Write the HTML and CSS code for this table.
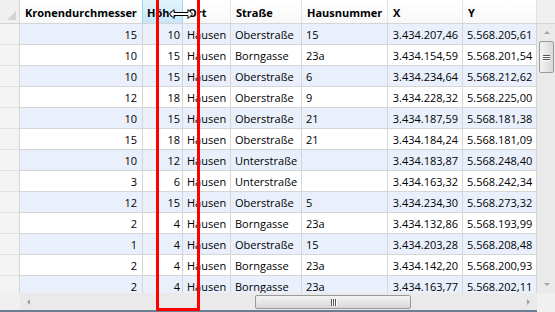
FILE: index.html
```html
<!DOCTYPE html>
<html>
<head>
<meta charset="utf-8">
<link rel="stylesheet" href="styles.css">
</head>
<body>
<div class="grid">
  <div class="corner"><span class="tri"></span></div>
  <div class="colheads">
    <div class="ch c1">Kronendurchmesser</div>
    <div class="ch c2 hot">Höhe</div>
    <div class="ch c3">Ort</div>
    <div class="ch c4">Straße</div>
    <div class="ch c5">Hausnummer</div>
    <div class="ch c6">X</div>
    <div class="ch c7">Y</div>
  </div>
  <div class="fill-tr"></div>

  <div class="rowheads">
    <div class="rh"></div><div class="rh"></div><div class="rh"></div><div class="rh"></div>
    <div class="rh"></div><div class="rh"></div><div class="rh"></div><div class="rh"></div>
    <div class="rh"></div><div class="rh"></div><div class="rh"></div><div class="rh"></div>
    <div class="rh"></div>
  </div>

  <div class="body">
    <div class="row alt"><div class="cell c1 num">15</div><div class="cell c2 num">10</div><div class="cell c3">Hausen</div><div class="cell c4">Oberstraße</div><div class="cell c5">15</div><div class="cell c6 num">3.434.207,46</div><div class="cell c7">5.568.205,61</div></div>
    <div class="row"><div class="cell c1 num">10</div><div class="cell c2 num">15</div><div class="cell c3">Hausen</div><div class="cell c4">Borngasse</div><div class="cell c5">23a</div><div class="cell c6 num">3.434.154,59</div><div class="cell c7">5.568.201,54</div></div>
    <div class="row alt"><div class="cell c1 num">10</div><div class="cell c2 num">15</div><div class="cell c3">Hausen</div><div class="cell c4">Oberstraße</div><div class="cell c5">6</div><div class="cell c6 num">3.434.234,64</div><div class="cell c7">5.568.212,62</div></div>
    <div class="row"><div class="cell c1 num">12</div><div class="cell c2 num">18</div><div class="cell c3">Hausen</div><div class="cell c4">Oberstraße</div><div class="cell c5">9</div><div class="cell c6 num">3.434.228,32</div><div class="cell c7">5.568.225,00</div></div>
    <div class="row alt"><div class="cell c1 num">10</div><div class="cell c2 num">15</div><div class="cell c3">Hausen</div><div class="cell c4">Oberstraße</div><div class="cell c5">21</div><div class="cell c6 num">3.434.187,59</div><div class="cell c7">5.568.181,38</div></div>
    <div class="row"><div class="cell c1 num">15</div><div class="cell c2 num">18</div><div class="cell c3">Hausen</div><div class="cell c4">Oberstraße</div><div class="cell c5">21</div><div class="cell c6 num">3.434.184,24</div><div class="cell c7">5.568.181,09</div></div>
    <div class="row alt"><div class="cell c1 num">10</div><div class="cell c2 num">12</div><div class="cell c3">Hausen</div><div class="cell c4">Unterstraße</div><div class="cell c5"></div><div class="cell c6 num">3.434.183,87</div><div class="cell c7">5.568.248,40</div></div>
    <div class="row"><div class="cell c1 num">3</div><div class="cell c2 num">6</div><div class="cell c3">Hausen</div><div class="cell c4">Unterstraße</div><div class="cell c5"></div><div class="cell c6 num">3.434.163,32</div><div class="cell c7">5.568.242,34</div></div>
    <div class="row alt"><div class="cell c1 num">12</div><div class="cell c2 num">15</div><div class="cell c3">Hausen</div><div class="cell c4">Oberstraße</div><div class="cell c5">5</div><div class="cell c6 num">3.434.234,30</div><div class="cell c7">5.568.273,32</div></div>
    <div class="row"><div class="cell c1 num">2</div><div class="cell c2 num">4</div><div class="cell c3">Hausen</div><div class="cell c4">Borngasse</div><div class="cell c5">23a</div><div class="cell c6 num">3.434.132,86</div><div class="cell c7">5.568.193,99</div></div>
    <div class="row alt"><div class="cell c1 num">1</div><div class="cell c2 num">4</div><div class="cell c3">Hausen</div><div class="cell c4">Oberstraße</div><div class="cell c5">15</div><div class="cell c6 num">3.434.203,28</div><div class="cell c7">5.568.208,48</div></div>
    <div class="row"><div class="cell c1 num">2</div><div class="cell c2 num">4</div><div class="cell c3">Hausen</div><div class="cell c4">Borngasse</div><div class="cell c5">23a</div><div class="cell c6 num">3.434.142,20</div><div class="cell c7">5.568.200,93</div></div>
    <div class="row alt"><div class="cell c1 num">2</div><div class="cell c2 num">4</div><div class="cell c3">Hausen</div><div class="cell c4">Borngasse</div><div class="cell c5">23a</div><div class="cell c6 num">3.434.163,77</div><div class="cell c7">5.568.202,11</div></div>
  </div>

  <div class="vscroll">
    <div class="sbtn"><span class="arr up"></span></div>
    <div class="vtrack">
      <div class="vthumb"><span class="grip-h"></span><span class="grip-h"></span><span class="grip-h"></span></div>
    </div>
    <div class="sbtn"><span class="arr down"></span></div>
  </div>

  <div class="fill-bl"></div>
  <div class="hscroll">
    <div class="hbtn"><span class="arr left"></span></div>
    <div class="htrack">
      <div class="hthumb"><span class="grip-v"></span><span class="grip-v"></span><span class="grip-v"></span></div>
    </div>
    <div class="hbtn"><span class="arr right"></span></div>
  </div>
  <div class="fill-br"></div>

  <div class="marker"></div>
  <svg class="cursor" width="24" height="10" viewBox="0 0 24 10">
    <path d="M0.5,5 L5,0.5 L5,3.5 L19,3.5 L19,0.5 L23.5,5 L19,9.5 L19,6.5 L5,6.5 L5,9.5 Z" fill="#fff" stroke="#000" stroke-width="1" stroke-linejoin="miter"/>
  </svg>
</div>
</body>
</html>
```

FILE: styles.css
```css
* { box-sizing: border-box; }
html, body { margin: 0; padding: 0; background: #fff; }
body {
  font-family: "Segoe UI", "Open Sans", "Noto Sans", sans-serif;
  font-size: 11px;
  color: #000;
}
.grid {
  position: relative;
  width: 555px;
  height: 312px;
  display: grid;
  grid-template-columns: 20px 517px 18px;
  grid-template-rows: 24px 269px 19px;
  overflow: hidden;
  background: #f0f0f0;
}
.corner {
  position: relative;
  background: #f0f0f0;
  border-right: 1px solid #d5d5d5;
  border-bottom: 1px solid #d5d5d5;
}
.tri {
  position: absolute;
  right: 3px;
  bottom: 3px;
  width: 0;
  height: 0;
  border-left: 9px solid transparent;
  border-bottom: 9px solid #d3d3d3;
}
.colheads {
  display: flex;
  background: linear-gradient(#ffffff, #f7f8f9);
  border-bottom: 1px solid #d5d5d5;
}
.ch {
  height: 100%;
  font-weight: bold;
  padding: 0 5px;
  line-height: 25px;
  border-right: 1px solid #e2e3e5;
  white-space: nowrap;
  overflow: hidden;
}
.ch.hot {
  background: linear-gradient(#e3f4fc, #c6e7fa);
  border-left: 1px solid #96d9f9;
  border-right: 1px solid #96d9f9;
  margin-left: -1px;
  padding-left: 4px;
}
.fill-tr {
  background: #f0f0f0;
  border-bottom: 1px solid #d5d5d5;
}
.c1 { width: 123px; }
.c2 { width: 40px; }
.c3 { width: 48px; }
.c4 { width: 71px; }
.c5 { width: 86px; }
.c6 { width: 75px; }
.c7 { width: 74px; }
.ch.c2 { width: 41px; }

.rowheads {
  overflow: hidden;
  background: #f3f3f3;
  border-right: 1px solid #d5d5d5;
}
.rh {
  height: 21px;
  border-bottom: 1px solid #e2e2e2;
}
.body {
  overflow: hidden;
  background: #fff;
}
.row {
  display: flex;
  height: 21px;
  border-bottom: 1px solid #d6d6d6;
  background: #fff;
}
.row.alt { background: #e9f0fb; }
.cell {
  height: 100%;
  line-height: 21px;
  padding: 0 4px;
  border-right: 1px solid #d6d6d6;
  white-space: nowrap;
  overflow: hidden;
}
.cell.num { text-align: right; }
.cell.c1 { padding-right: 5px; }
.cell.c2 { padding-right: 2px; }

.vscroll {
  display: flex;
  flex-direction: column;
  background: #eaeaea;
  padding-left: 1px;
}
.sbtn {
  height: 17px;
  display: flex;
  align-items: center;
  justify-content: center;
}
.vtrack {
  flex: 1;
}
.vthumb {
  margin: 0 1px;
  height: 32px;
  border: 1px solid #9a9a9a;
  border-radius: 2px;
  background: linear-gradient(90deg, #f3f3f3, #e6e6e6 50%, #d8d8d8);
  display: flex;
  flex-direction: column;
  align-items: center;
  justify-content: center;
  gap: 1px;
}
.grip-h {
  width: 7px;
  height: 1px;
  background: #555;
  box-shadow: 0 1px 0 #fff;
}
.arr { width: 0; height: 0; }
.arr.up { border-left: 3px solid transparent; border-right: 3px solid transparent; border-bottom: 3px solid #a3a3a3; }
.arr.down { border-left: 3px solid transparent; border-right: 3px solid transparent; border-top: 3px solid #a3a3a3; }
.arr.left { border-top: 3px solid transparent; border-bottom: 3px solid transparent; border-right: 3px solid #a3a3a3; }
.arr.right { border-top: 3px solid transparent; border-bottom: 3px solid transparent; border-left: 3px solid #a3a3a3; }

.fill-bl {
  background: #f0f0f0;
  border-bottom: 2px solid #6b7e96;
}
.hscroll {
  display: flex;
  background: #eaeaea;
  border-bottom: 2px solid #6b7e96;
  padding-top: 2px;
}
.hbtn {
  width: 17px;
  display: flex;
  align-items: center;
  justify-content: center;
  margin-top: -2px;
}
.htrack {
  flex: 1;
  padding-left: 218px;
}
.hthumb {
  width: 156px;
  height: 14px;
  border: 1px solid #9a9a9a;
  border-radius: 2px;
  background: linear-gradient(#f3f3f3, #e6e6e6 50%, #d8d8d8);
  display: flex;
  align-items: center;
  justify-content: center;
  gap: 1px;
}
.grip-v {
  width: 1px;
  height: 7px;
  background: #555;
  box-shadow: 1px 0 0 #fff;
}
.fill-br {
  background: #f0f0f0;
}
.marker {
  position: absolute;
  left: 156px;
  top: -6px;
  width: 44px;
  height: 317px;
  border: 3px solid #ff0000;
  pointer-events: none;
}
.cursor {
  position: absolute;
  left: 169px;
  top: 9px;
}
```
